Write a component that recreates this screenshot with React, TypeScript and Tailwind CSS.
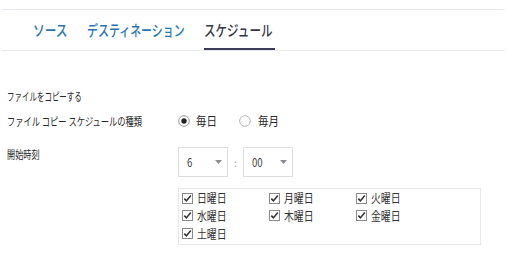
import React from "react";

const jp = { fontFamily: '"Noto Sans CJK JP", "Noto Sans", sans-serif' };

const days = ["日曜日", "月曜日", "火曜日", "水曜日", "木曜日", "金曜日", "土曜日"];

function Squeeze({ children, className = "" }: { children: React.ReactNode; className?: string }) {
  return <span className={`inline-block origin-left whitespace-nowrap ${className}`}>{children}</span>;
}

function CheckIcon() {
  return (
    <svg width="11" height="11" viewBox="0 0 11 11" className="shrink-0">
      <rect x="0.5" y="0.5" width="10" height="10" fill="#fff" stroke="#8a8a8a" />
      <path d="M2.3 5.6 L4.4 7.9 L8.8 2.6" fill="none" stroke="#333" strokeWidth="1.6" />
    </svg>
  );
}

function Radio({ checked }: { checked?: boolean }) {
  return (
    <svg width="12" height="12" viewBox="0 0 12 12" className="shrink-0">
      <circle cx="6" cy="6" r="5.3" fill="#fff" stroke={checked ? "#9a9a9a" : "#b4b4b4"} />
      {checked && <circle cx="6" cy="6" r="2.7" fill="#222" />}
    </svg>
  );
}

function Select({ value }: { value: string }) {
  return (
    <div className="flex h-[30px] w-[50px] items-center justify-between border border-[#dedede] bg-white pl-[8px] pr-[5px]">
      <Squeeze className="scale-x-[0.8] text-[12px] text-[#444]">{value}</Squeeze>
      <svg width="7" height="4" viewBox="0 0 7 4">
        <path d="M0 0 H7 L3.5 4 Z" fill="#8a8f96" />
      </svg>
    </div>
  );
}

export default function App() {
  return (
    <div className="h-[275px] w-[507px] overflow-hidden bg-white" style={jp}>
      <div className="mx-[2px] mt-[9px] flex h-[42px] border-y border-[#e7ebef] pl-[31px]">
        <div className="flex w-[54px] items-center pb-[2px]">
          <Squeeze className="scale-x-[0.78] text-[15px] font-medium leading-none text-[#2874b2]">ソース</Squeeze>
        </div>
        <div className="flex w-[117px] items-center pb-[2px]">
          <Squeeze className="scale-x-[0.73] text-[15px] font-medium leading-none text-[#2874b2]">デスティネーション</Squeeze>
        </div>
        <div className="flex w-[71px] items-center border-b-2 border-[#3c3b55]">
          <Squeeze className="scale-x-[0.77] text-[15px] font-medium leading-none text-[#353545]">スケジュール</Squeeze>
        </div>
      </div>

      <div className="flex flex-col pl-[7px] text-[11px] text-[#262626]">
        <div className="mt-[37px] h-[16px] leading-[16px]">
          <Squeeze className="scale-x-[0.68]">ファイルをコピーする</Squeeze>
        </div>

        <div className="mt-[9px] flex h-[16px] items-center">
          <div className="w-[171px] leading-[16px]">
            <Squeeze className="scale-x-[0.75]">ファイル コピー スケジュールの種類</Squeeze>
          </div>
          <div className="flex items-center text-[12px]">
            <div className="flex w-[61px] items-center">
              <Radio checked />
              <Squeeze className="ml-[6px] scale-x-[0.87]">毎日</Squeeze>
            </div>
            <div className="flex items-center">
              <Radio />
              <Squeeze className="ml-[7px] scale-x-[0.87]">毎月</Squeeze>
            </div>
          </div>
        </div>

        <div className="mt-[18px] flex">
          <div className="-mt-[1px] w-[171px] leading-[16px]">
            <Squeeze className="scale-x-[0.74]">開始時刻</Squeeze>
          </div>
          <div className="flex items-center">
            <Select value="6" />
            <span className="w-[15px] text-center text-[10px] text-[#999]">:</span>
            <Select value="00" />
          </div>
        </div>

        <div className="mt-[11px] flex">
          <div className="w-[171px]" />
          <div className="grid h-[57px] w-[303px] grid-cols-[87px_87px_1fr] border-[1.5px] border-[#e4e8ec] pl-[3px] pt-[2px]">
            {days.map((d) => (
              <div key={d} className="flex h-[14.5px] items-center">
                <CheckIcon />
                <Squeeze className="ml-[4px] scale-x-[0.82] text-[12px] leading-none text-[#333]">{d}</Squeeze>
              </div>
            ))}
          </div>
        </div>
      </div>
    </div>
  );
}
